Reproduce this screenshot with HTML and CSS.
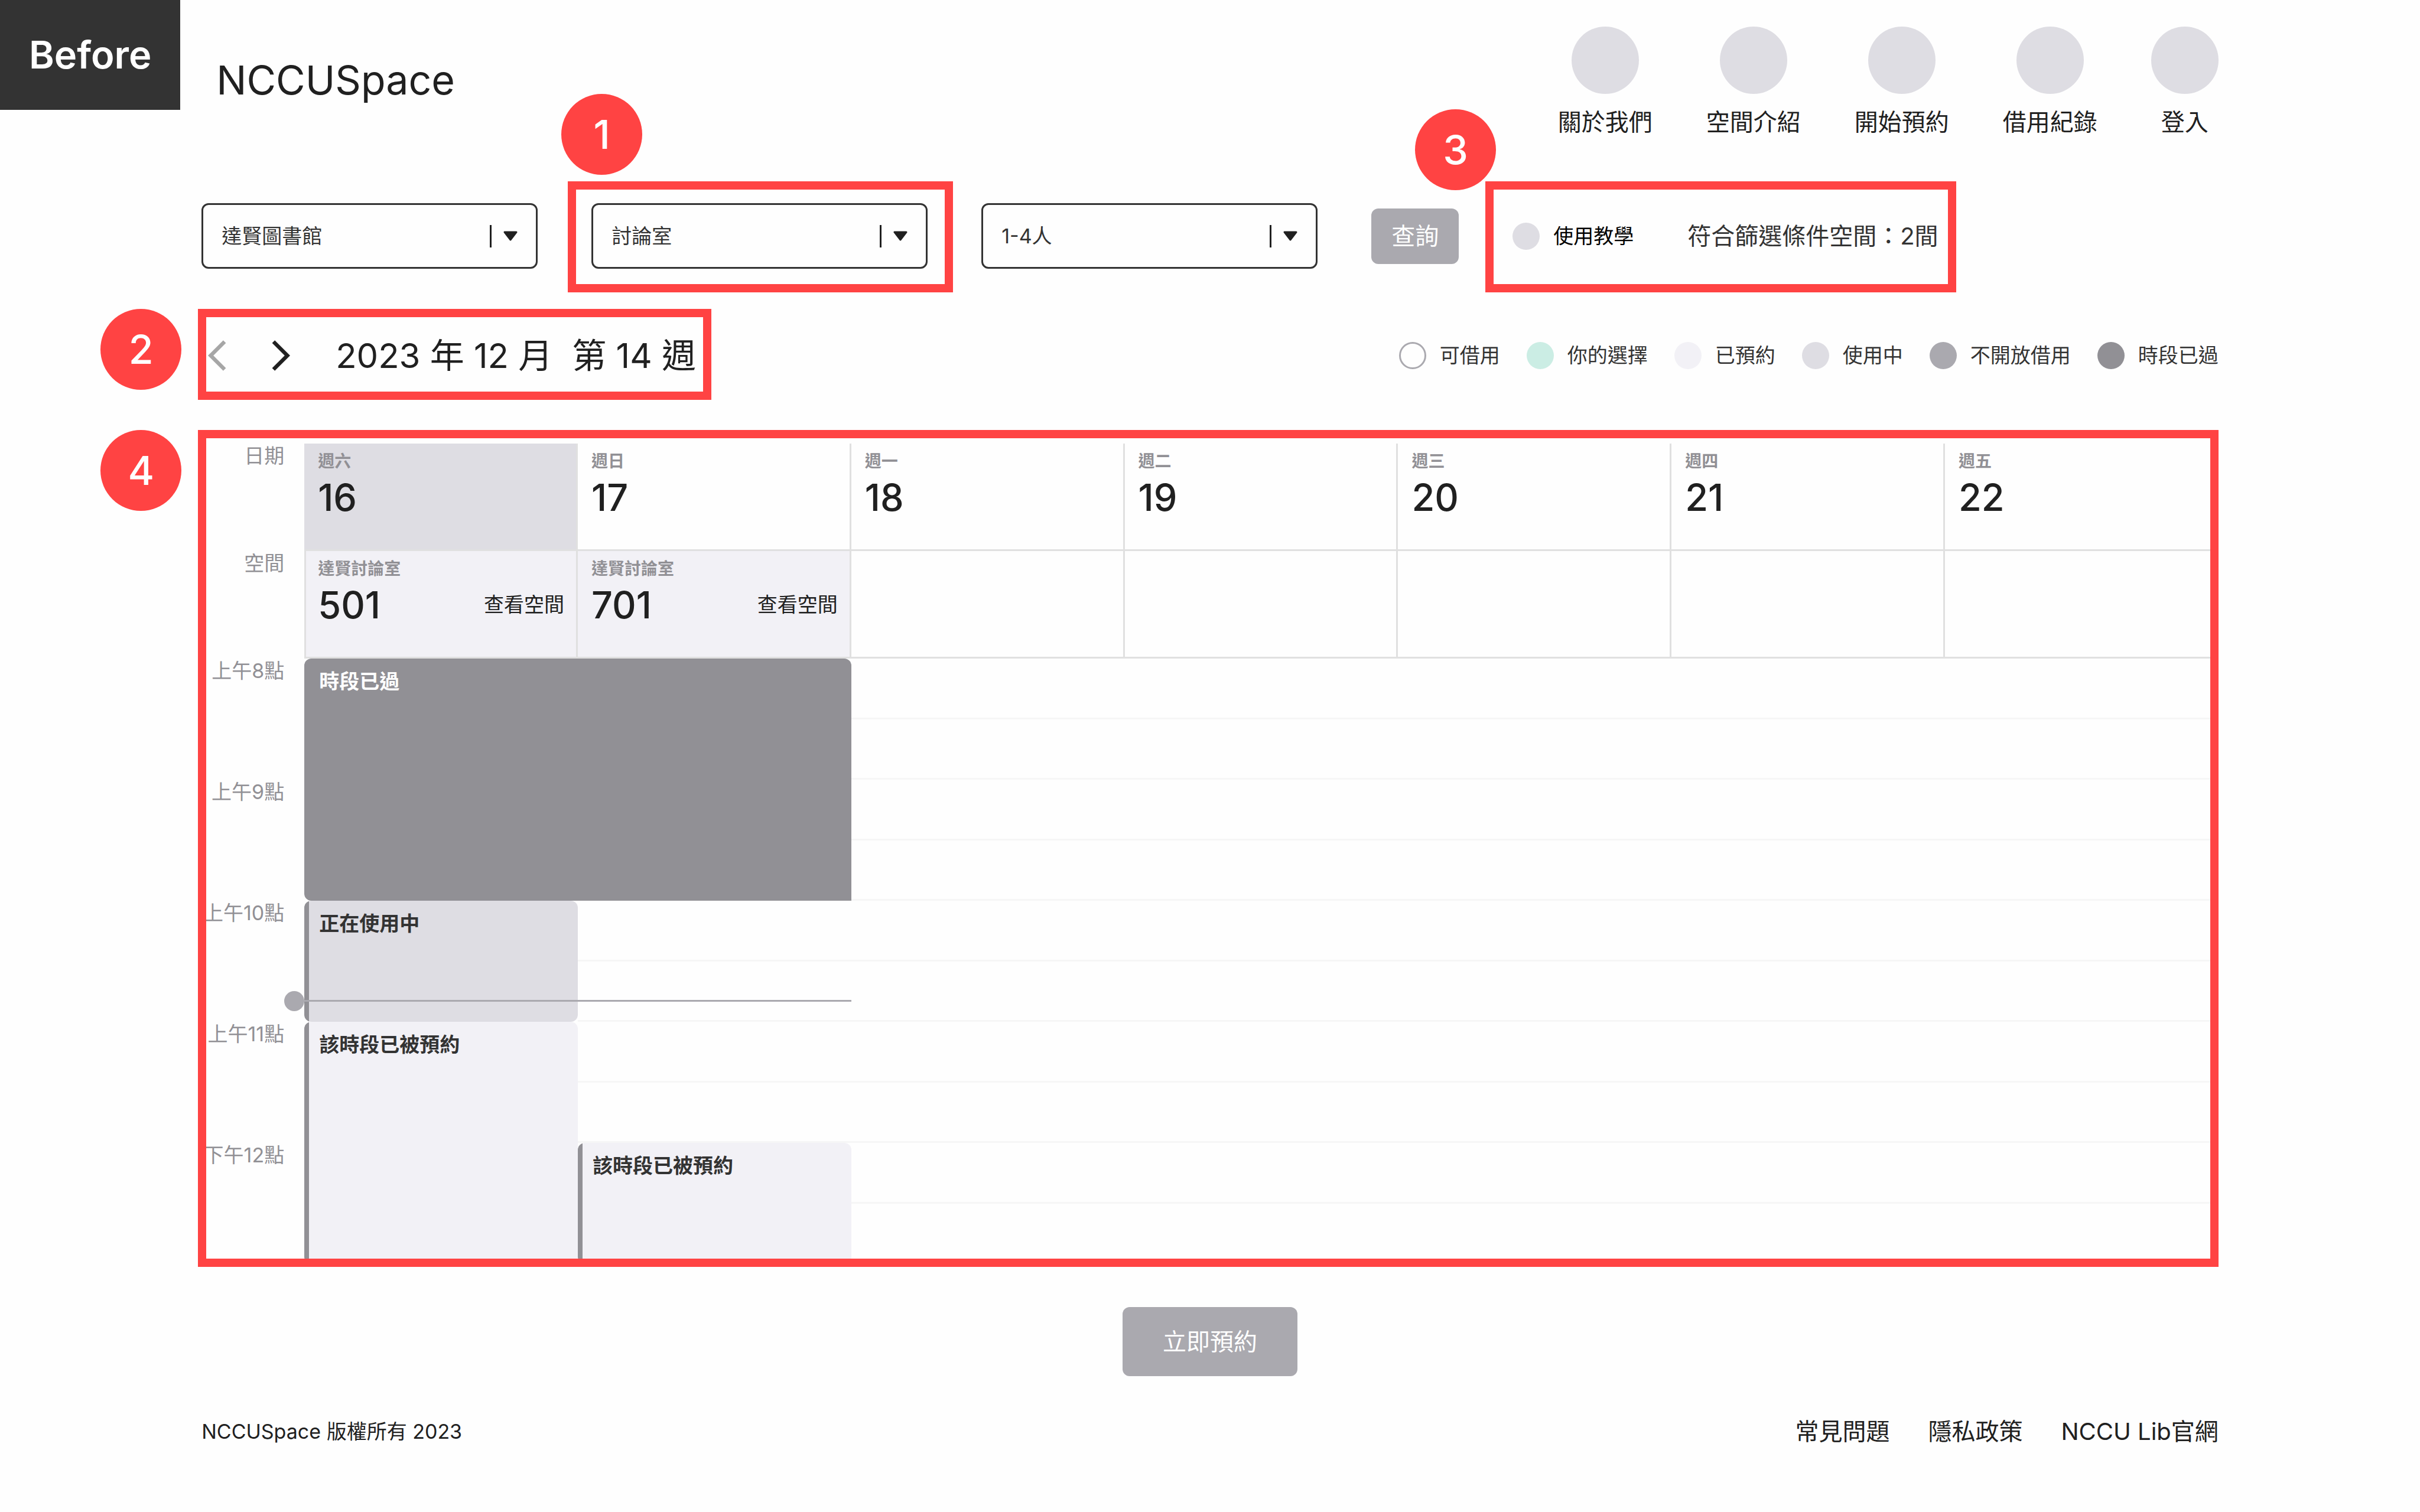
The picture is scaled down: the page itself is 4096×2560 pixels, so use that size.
FILE: index.html
```html
<!DOCTYPE html>
<html lang="zh-Hant">
<head>
<meta charset="utf-8">
<title>NCCUSpace</title>
<link rel="stylesheet" href="styles.css">
</head>
<body>
<div class="tag">Before</div>
<div class="page">
  <header class="header">
    <h1 class="logo">NCCUSpace</h1>
    <nav class="nav">
      <a class="nav-item" href="#about"><span class="nav-icon"></span>關於我們</a>
      <a class="nav-item" href="#spaces"><span class="nav-icon"></span>空間介紹</a>
      <a class="nav-item" href="#book"><span class="nav-icon"></span>開始預約</a>
      <a class="nav-item" href="#history"><span class="nav-icon"></span>借用紀錄</a>
      <a class="nav-item" href="#login"><span class="nav-icon"></span>登入</a>
    </nav>
  </header>

  <main>
    <form class="filters">
      <div class="field">
        <select class="select" aria-label="館別"><option>達賢圖書館</option></select>
        <svg class="select-mark" viewBox="0 0 48 38"><path d="M0 0h3v38H0z"/><path class="tri" d="M25 12h20L35 25z"/></svg>
      </div>
      <div class="field">
        <select class="select" aria-label="空間類型"><option>討論室</option></select>
        <svg class="select-mark" viewBox="0 0 48 38"><path d="M0 0h3v38H0z"/><path class="tri" d="M25 12h20L35 25z"/></svg>
        <div class="frame frame-type"><span class="badge">1</span></div>
      </div>
      <div class="field">
        <select class="select" aria-label="人數"><option>1-4人</option></select>
        <svg class="select-mark" viewBox="0 0 48 38"><path d="M0 0h3v38H0z"/><path class="tri" d="M25 12h20L35 25z"/></svg>
      </div>
      <button class="button" type="button">查詢</button>
      <div class="result">
        <a class="guide" href="#guide"><span class="dot dot-using"></span>使用教學</a>
        <p class="count">符合篩選條件空間：2間</p>
        <div class="frame frame-result"><span class="badge">3</span></div>
      </div>
    </form>

    <div class="toolbar">
      <div class="week">
        <button class="arrow arrow-off" type="button" aria-label="上一週"><svg viewBox="6 2 12 20"><path d="M17.77 3.77L16 2 6 12l10 10 1.77-1.77L9.54 12z"/></svg></button>
        <button class="arrow" type="button" aria-label="下一週"><svg viewBox="6 2 12 20"><path d="M6.23 20.23L8 22l10-10L8 2 6.23 3.77 14.46 12z"/></svg></button>
        <h2 class="week-title"><span>2023 年 12 月</span><span>第 14 週</span></h2>
        <div class="frame frame-week"><span class="badge">2</span></div>
      </div>
      <ul class="legend">
        <li><span class="dot dot-free"></span>可借用</li>
        <li><span class="dot dot-chosen"></span>你的選擇</li>
        <li><span class="dot dot-booked"></span>已預約</li>
        <li><span class="dot dot-using"></span>使用中</li>
        <li><span class="dot dot-closed"></span>不開放借用</li>
        <li><span class="dot dot-past"></span>時段已過</li>
      </ul>
    </div>

    <div class="calendar">
      <table class="grid">
        <colgroup><col class="col-label"><col span="7"></colgroup>
        <thead>
          <tr>
            <th class="label" scope="row"><div>日期</div></th>
            <th class="cell today" scope="col"><div class="small">週六</div><div class="big">16</div></th>
            <th class="cell" scope="col"><div class="small">週日</div><div class="big">17</div></th>
            <th class="cell" scope="col"><div class="small">週一</div><div class="big">18</div></th>
            <th class="cell" scope="col"><div class="small">週二</div><div class="big">19</div></th>
            <th class="cell" scope="col"><div class="small">週三</div><div class="big">20</div></th>
            <th class="cell" scope="col"><div class="small">週四</div><div class="big">21</div></th>
            <th class="cell" scope="col"><div class="small">週五</div><div class="big">22</div></th>
          </tr>
          <tr>
            <th class="label" scope="row"><div>空間</div></th>
            <td class="cell room room-first"><div class="small">達賢討論室</div><div class="big">501<a class="view" href="#501">查看空間</a></div></td>
            <td class="cell room"><div class="small">達賢討論室</div><div class="big">701<a class="view" href="#701">查看空間</a></div></td>
            <td class="cell"></td><td class="cell"></td><td class="cell"></td><td class="cell"></td><td class="cell"></td>
          </tr>
        </thead>
        <tbody>
          <tr>
            <th class="label" scope="row"><div>上午8點</div></th>
            <td class="event past" colspan="2" rowspan="2">時段已過</td>
            <td class="slot"></td><td class="slot"></td><td class="slot"></td><td class="slot"></td><td class="slot"></td>
          </tr>
          <tr>
            <th class="label" scope="row"><div>上午9點</div></th>
            <td class="slot"></td><td class="slot"></td><td class="slot"></td><td class="slot"></td><td class="slot"></td>
          </tr>
          <tr>
            <th class="label" scope="row"><div>上午10點</div></th>
            <td class="event using">正在使用中<div class="now"></div></td>
            <td class="slot"></td><td class="slot"></td><td class="slot"></td><td class="slot"></td><td class="slot"></td><td class="slot"></td>
          </tr>
          <tr>
            <th class="label" scope="row"><div>上午11點</div></th>
            <td class="event booked" rowspan="2">該時段已被預約</td>
            <td class="slot"></td><td class="slot"></td><td class="slot"></td><td class="slot"></td><td class="slot"></td><td class="slot"></td>
          </tr>
          <tr>
            <th class="label" scope="row"><div>下午12點</div></th>
            <td class="event booked">該時段已被預約</td>
            <td class="slot"></td><td class="slot"></td><td class="slot"></td><td class="slot"></td><td class="slot"></td>
          </tr>
        </tbody>
      </table>
      <div class="frame frame-calendar"><span class="badge">4</span></div>
    </div>

    <div class="submit"><button class="button button-large" type="button">立即預約</button></div>
  </main>

  <footer class="footer">
    <p class="copyright">NCCUSpace 版權所有 2023</p>
    <nav class="links">
      <a href="#faq">常見問題</a>
      <a href="#privacy">隱私政策</a>
      <a href="#lib">NCCU Lib官網</a>
    </nav>
  </footer>
</div>
</body>
</html>
```
FILE: styles.css
```css
* {
  box-sizing: border-box;
}

body {
  margin: 0;
  background: #fefefe;
  color: #202020;
  font-family: Inter, "Noto Sans CJK TC", sans-serif;
  font-size: 34px;
  line-height: 42px;
}

h1, h2, p, ul {
  margin: 0;
  padding: 0;
  font-weight: 400;
}

a {
  color: inherit;
  text-decoration: none;
}

button, select {
  margin: 0;
  padding: 0;
  border: 0;
  background: none;
  color: inherit;
  font: inherit;
}

.page {
  padding: 45px 8.33% 110px;
}

.tag {
  position: absolute;
  top: 0;
  left: 0;
  padding: 53px 49px;
  background: #333;
  color: #fff;
  font-size: 65px;
  font-weight: 600;
  line-height: 80px;
}

/* Header */
.header {
  display: flex;
  justify-content: space-between;
  align-items: flex-start;
}

.logo {
  padding: 50px 0 0 25px;
  font-size: 68px;
  line-height: 80px;
}

.nav {
  display: flex;
  gap: 91px;
}

.nav-item {
  display: flex;
  flex-direction: column;
  align-items: center;
  gap: 24px;
  font-size: 40px;
  line-height: 48px;
}

.nav-icon {
  width: 114px;
  height: 114px;
  border-radius: 50%;
  background: #dedde3;
}

/* Filters */
.filters {
  display: flex;
  align-items: center;
  gap: 91px;
  margin-top: 113px;
}

.field {
  position: relative;
  display: grid;
  align-items: center;
  width: 569px;
}

.select {
  grid-area: 1 / 1;
  height: 111px;
  padding-left: 31px;
  border: 3px solid #333;
  border-radius: 12px;
  color: #333;
  appearance: none;
}

.select-mark {
  grid-area: 1 / 1;
  justify-self: end;
  width: 48px;
  height: 38px;
  margin-right: 33px;
  fill: #202020;
  pointer-events: none;
}

.tri {
  stroke: #202020;
  stroke-width: 3;
  stroke-linejoin: round;
}

.button {
  width: 148px;
  height: 94px;
  border-radius: 12px;
  background: #aaa9af;
  color: #fefefe;
  font-size: 40px;
  line-height: 48px;
}

.button-large {
  width: 296px;
  height: 117px;
}

.result {
  position: relative;
  display: flex;
  align-items: center;
  gap: 91px;
  height: 111px;
}

.guide {
  display: flex;
  align-items: center;
  gap: 23px;
  color: #000;
}

.count {
  color: #333;
  font-size: 40px;
  line-height: 48px;
}

.dot {
  width: 46px;
  height: 46px;
  border-radius: 50%;
}

.dot-free { border: 3px solid #aaa9af; }
.dot-chosen { background: #cbede4; }
.dot-booked { background: #f2f1f6; }
.dot-using { background: #dedde3; }
.dot-closed { background: #aaa9af; }
.dot-past { background: #919095; }

/* Week switcher and legend */
.toolbar {
  display: flex;
  justify-content: space-between;
  align-items: center;
  margin-top: 107px;
}

.week {
  position: relative;
  display: flex;
  align-items: center;
}

.arrow {
  height: 80px;
  padding: 0 11px;
}

.arrow + .arrow {
  margin-left: 55px;
}

.arrow svg {
  display: block;
  width: 31px;
  height: 52px;
  fill: #202020;
}

.arrow-off svg {
  fill: #a6a6a6;
}

.week-title {
  display: flex;
  gap: 33px;
  margin-left: 66px;
  font-size: 58px;
  line-height: 80px;
}

.legend {
  display: flex;
  gap: 45px;
  color: #333;
  list-style: none;
}

.legend li {
  display: flex;
  align-items: center;
  gap: 23px;
}

/* Calendar */
.calendar {
  position: relative;
  margin-top: 109px;
}

.grid {
  width: 100%;
  border-spacing: 0;
  table-layout: fixed;
}

.col-label {
  width: 174px;
}

.grid th, .grid td {
  padding: 0;
  text-align: left;
  vertical-align: top;
}

.grid .label {
  padding-right: 34px;
  color: #919095;
  font-weight: 400;
}

.label div {
  display: flex;
  justify-content: flex-end;
  white-space: nowrap;
}

.grid .cell {
  height: 182px;
  padding: 12px 20px 0 23px;
  border-right: 3px solid #e0e0e0;
  border-bottom: 3px solid #e0e0e0;
}

.grid .today {
  background: #dedde3;
}

.room {
  background: #f2f1f6;
}

.grid .room-first {
  padding-left: 20px;
  border-left: 3px solid #e0e0e0;
}

.small {
  margin-bottom: 5px;
  color: #919095;
  font-size: 28px;
  font-weight: 700;
  line-height: 36px;
}

.big {
  display: flex;
  justify-content: space-between;
  font-size: 63px;
  font-weight: 500;
  line-height: 76px;
}

.view {
  font-size: 34px;
  font-weight: 400;
}

.slot, .event {
  height: 205px;
}

.slot {
  background-image: linear-gradient(#f6f6f6, #f6f6f6), linear-gradient(#f6f6f6, #f6f6f6);
  background-position: 0 100px, 0 100%;
  background-repeat: no-repeat;
  background-size: 100% 3px;
}

.grid .event {
  position: relative;
  padding: 18px 0 0 25px;
  border-radius: 12px;
  color: #333;
  font-weight: 700;
}

.grid .past {
  border-bottom-right-radius: 0;
  background: #919095;
  color: #fefefe;
}

.using {
  background: linear-gradient(to right, #919095 8px, #dedde3 8px);
}

.booked {
  background: linear-gradient(to right, #919095 8px, #f2f1f6 8px);
}

/* Current-time marker, laid over the first two days */
.now {
  position: absolute;
  z-index: 1;
  top: 168px;
  left: 0;
  width: 200%;
  height: 3px;
  background: #aaa9af;
}

.now::before {
  content: "";
  position: absolute;
  top: -15px;
  left: -34px;
  width: 34px;
  height: 34px;
  border-radius: 50%;
  background: #aaa9af;
}

/* Review notes laid over the page */
.frame {
  position: absolute;
  z-index: 2;
  border: 14px solid #ff4343;
  pointer-events: none;
}

.frame-type { inset: -37px -43px -40px -40px; }
.frame-result { inset: -37px -30px -40px -46px; }
.frame-week { inset: -39px -26px -35px -6px; }
.frame-calendar { inset: -23px 0 -5px -6px; }

.badge {
  position: absolute;
  width: 137px;
  height: 137px;
  border-radius: 50%;
  background: #ff4343;
  color: #fefefe;
  font-size: 68px;
  font-weight: 500;
  line-height: 137px;
  text-align: center;
}

.frame-type .badge { top: -162px; left: -25px; }
.frame-result .badge { top: -136px; left: -133px; }
.frame-week .badge, .frame-calendar .badge { top: -14px; left: -179px; }

/* Booking button and footer */
.submit {
  display: flex;
  justify-content: center;
  margin-top: 73px;
}

.footer {
  display: flex;
  justify-content: space-between;
  align-items: center;
  margin-top: 70px;
}

.links {
  display: flex;
  gap: 65px;
  font-size: 40px;
  line-height: 48px;
}
```
